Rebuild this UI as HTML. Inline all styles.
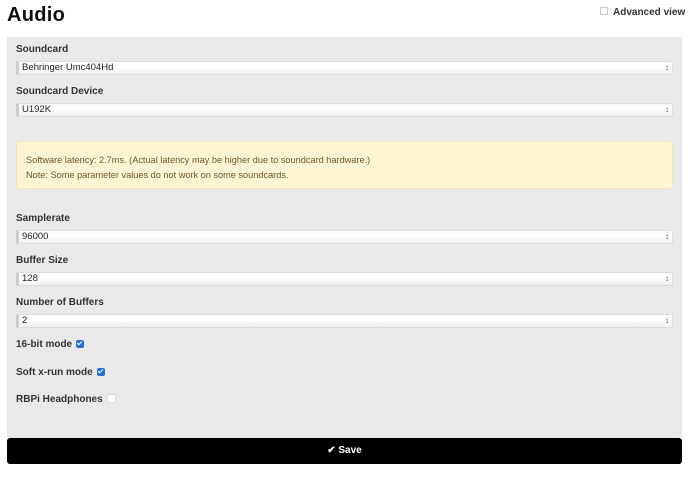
<!DOCTYPE html>
<html><head><style>
body{margin:0;width:690px;height:479px;background:#fff;font-family:"Liberation Sans",sans-serif;position:relative;overflow:hidden}
.a{position:absolute}
h1{position:absolute;left:7px;top:4px;margin:0;font-size:20px;font-weight:bold;color:#111;letter-spacing:0.3px}
.panel{left:7px;top:37px;width:675px;height:401px;background:#e9e9e9}
.lbl{position:absolute;left:16px;font-size:10px;font-weight:bold;color:#333}
.sel{position:absolute;left:16px;height:12px;background:linear-gradient(#fafafa,#fff 40%,#eee);border:1px solid #ddd;border-left:3px solid #ccc;border-radius:2px;font-size:9.5px;color:#222;line-height:12px;padding-left:3px;box-sizing:content-box;width:650px}
.sel:after{content:"\2195";position:absolute;right:3px;top:0;font-size:8px;color:#555}
.cb{display:inline-block;width:8px;height:8px;border-radius:2px;vertical-align:-1px;margin-left:4px;position:relative}
.on{background:#2a6fd6}
.on:after{content:"";position:absolute;left:2px;top:0px;width:2px;height:4px;border:solid #fff;border-width:0 1.5px 1.5px 0;transform:rotate(45deg)}
.off{background:#fff;border:1px solid #ddd;width:7px;height:7px}
.alert{left:16px;top:141px;width:657px;height:48px;background:#fcf4d2;border:1px solid #f3e6b0;border-radius:3px;box-sizing:border-box;color:#6f5628;font-size:9.2px;padding:11px 0 0 9px;line-height:15px}
.save{left:7px;top:438px;width:675px;height:26px;background:#000;border-radius:3px;color:#fff;font-size:10px;font-weight:bold;text-align:center;line-height:26px}
</style></head><body>
<h1>Audio</h1>
<div class="a" style="left:600px;top:7px;font-size:10px;font-weight:bold;color:#333"><span style="display:inline-block;width:6px;height:6px;border:1px solid #ccc;margin-right:5px"></span>Advanced view</div>
<div class="a panel"></div>
<div class="lbl" style="top:44px">Soundcard</div>
<div class="sel" style="top:61px">Behringer Umc404Hd</div>
<div class="lbl" style="top:86px">Soundcard Device</div>
<div class="sel" style="top:103px">U192K</div>
<div class="a alert">Software latency: 2.7ms. (Actual latency may be higher due to soundcard hardware.)<br>Note: Some parameter values do not work on some soundcards.</div>
<div class="lbl" style="top:213px">Samplerate</div>
<div class="sel" style="top:230px">96000</div>
<div class="lbl" style="top:255px">Buffer Size</div>
<div class="sel" style="top:272px">128</div>
<div class="lbl" style="top:297px">Number of Buffers</div>
<div class="sel" style="top:314px">2</div>
<div class="lbl" style="top:339px">16-bit mode<span class="cb on"></span></div>
<div class="lbl" style="top:367px">Soft x-run mode<span class="cb on"></span></div>
<div class="lbl" style="top:394px">RBPi Headphones<span class="cb off"></span></div>
<div class="a save">✔ Save</div>
</body></html>
